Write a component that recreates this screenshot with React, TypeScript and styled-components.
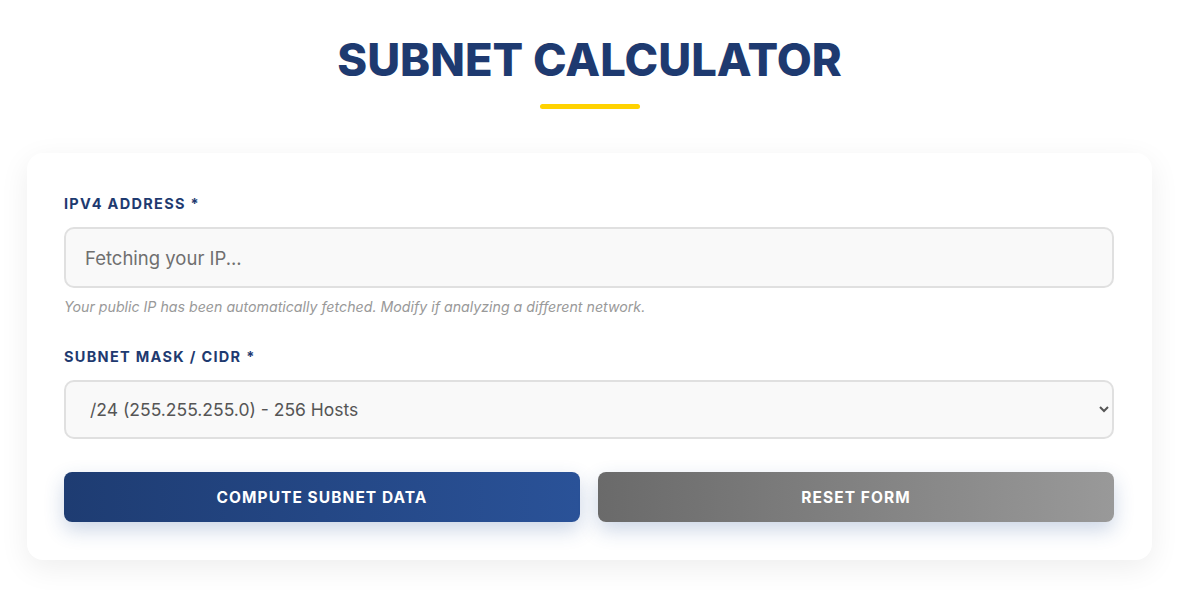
import styled, { createGlobalStyle } from 'styled-components';

const GlobalStyle = createGlobalStyle`
	* {
		box-sizing: border-box;
	}
	body {
		margin: 0;
		background: #ffffff;
		font-family: Inter, 'Noto Sans', sans-serif;
	}
`;

const Page = styled.main`
	padding: 30px 42px 30px 27px;
	display: flex;
	flex-direction: column;
	align-items: stretch;
`;

const Header = styled.header`
	display: flex;
	flex-direction: column;
	align-items: center;
	margin-bottom: 44px;
`;

const Title = styled.h1`
	margin: 0;
	font-size: 45.3px;
	font-weight: 800;
	letter-spacing: 0;
	color: #1e3a70;
	line-height: 60px;
`;

const Underline = styled.span`
	display: block;
	width: 100px;
	height: 5px;
	border-radius: 3px;
	background: #ffd200;
	margin-top: 14px;
`;

const Card = styled.section`
	background: #fff;
	border-radius: 16px;
	padding: 42px 38px 38px 37px;
	box-shadow: 0 8px 30px rgba(0, 0, 0, 0.07);
	display: flex;
	flex-direction: column;
`;

const Field = styled.div`
	display: flex;
	flex-direction: column;
	margin-bottom: ${props => (props.$last ? '33px' : '33px')};
`;

const Label = styled.label`
	font-size: 14.5px;
	font-weight: 700;
	letter-spacing: 1.3px;
	color: #1e3a70;
	text-transform: uppercase;
	margin-bottom: 15px;
`;

const Input = styled.input`
	height: 61px;
	border: 2px solid #e0e0e0;
	border-radius: 10px;
	background: #f9f9f9;
	padding: 0 19px;
	font-family: inherit;
	font-size: 18.5px;
	color: #333;
	outline: none;

	&::placeholder {
		color: #6f6f6f;
	}
`;

const Hint = styled.small`
	margin-top: 10px;
	font-size: 14.2px;
	font-style: italic;
	color: #999;
`;

const Select = styled.select`
	height: 59px;
	border: 2px solid #e0e0e0;
	border-radius: 10px;
	background: #f9f9f9;
	padding: 0 14px 0 20px;
	font-family: inherit;
	font-size: 17.5px;
	color: #555;
	outline: none;
`;

const Actions = styled.div`
	display: grid;
	grid-template-columns: 1fr 1fr;
	gap: 18px;
`;

const Button = styled.button`
	height: 50px;
	border: none;
	border-radius: 8px;
	color: #fff;
	font-family: inherit;
	font-size: 15.5px;
	font-weight: 700;
	letter-spacing: 1.05px;
	text-transform: uppercase;
	cursor: pointer;
	background: ${props =>
		props.$variant === 'reset'
			? 'linear-gradient(90deg, #6a6a6a, #999999)'
			: 'linear-gradient(90deg, #1e3c72, #2a5298)'};
	box-shadow: 0 8px 20px rgba(42, 82, 152, 0.24);
`;

const App = () => {
	return (
		<>
			<GlobalStyle />
			<Page>
				<Header>
					<Title>SUBNET CALCULATOR</Title>
					<Underline />
				</Header>
				<Card>
					<Field>
						<Label htmlFor="ip">IPv4 Address *</Label>
						<Input id="ip" type="text" placeholder="Fetching your IP..." />
						<Hint>Your public IP has been automatically fetched. Modify if analyzing a different network.</Hint>
					</Field>
					<Field $last>
						<Label htmlFor="cidr">Subnet Mask / CIDR *</Label>
						<Select id="cidr" defaultValue="24">
							<option value="24">/24 (255.255.255.0) - 256 Hosts</option>
						</Select>
					</Field>
					<Actions>
						<Button type="button">Compute Subnet Data</Button>
						<Button type="button" $variant="reset">Reset Form</Button>
					</Actions>
				</Card>
			</Page>
		</>
	);
};

export default App;
